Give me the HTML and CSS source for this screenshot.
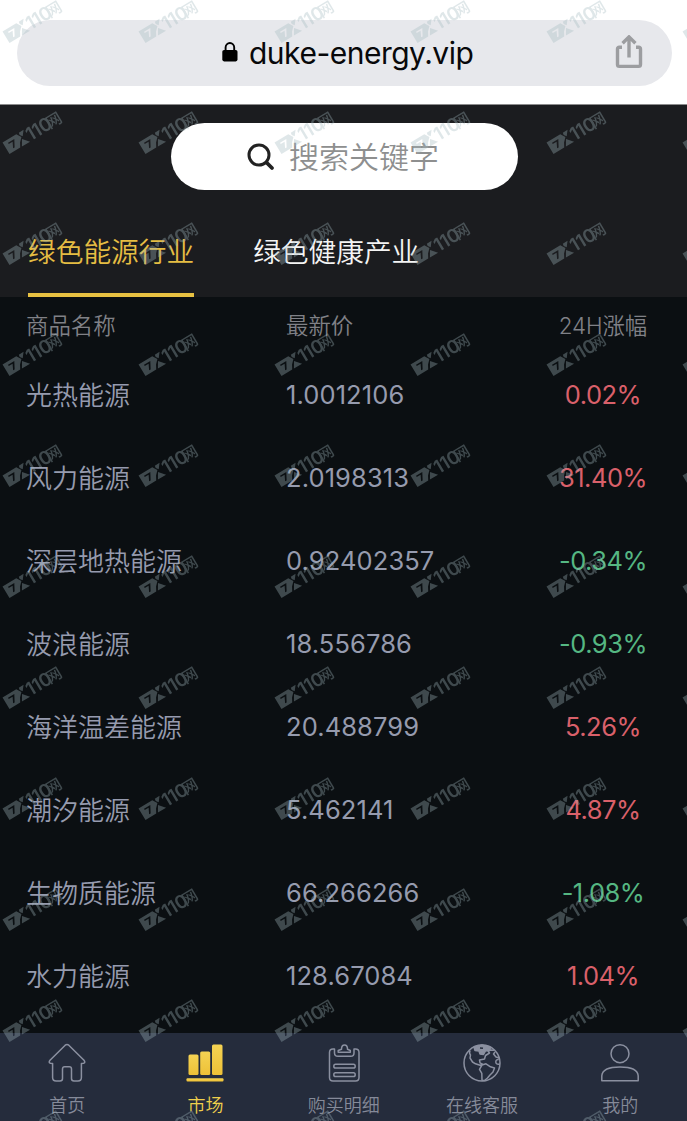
FILE: index.html
```html
<!DOCTYPE html>
<html lang="zh-CN">
<head>
<meta charset="utf-8">
<title>duke-energy.vip</title>
<link rel="stylesheet" href="styles.css">
</head>
<body>
<div class="screen">
  <header class="browser">
    <div class="address">
      <svg class="lock" viewBox="0 0 16 20"><rect x="0.3" y="8" width="15.2" height="11.4" rx="1.8" fill="#000"/><path d="M3.6 9V5.6a4.3 4.6 0 0 1 8.6 0V9" fill="none" stroke="#000" stroke-width="1.9"/></svg>
      <span class="url">duke-energy.vip</span>
      <svg class="share" viewBox="0 0 28 34"><path d="M7 12.3H4.2a1.7 1.7 0 0 0-1.7 1.7v15.500a1.900 1.900 0 0 0 1.900 1.900h19.200a1.900 1.900 0 0 0 1.900-1.900V14a1.700 1.700 0 0 0-1.700-1.700H21M14 22.500V3M7.600 8.300 14 1.900l6.400 6.400" fill="none" stroke="#9c9da0" stroke-width="3.400"/></svg>
    </div>
  </header>
  <section class="top">
    <div class="search">
      <svg class="glass" viewBox="0 0 28 28"><circle cx="12" cy="12" r="10" fill="none" stroke="#222" stroke-width="3"/><path d="M19.500 19.500 25 25" stroke="#222" stroke-width="3.800" stroke-linecap="round"/></svg>
      <span class="hint">搜索关键字</span>
    </div>
    <nav class="tabs">
      <span class="tab tab-active">绿色能源行业</span>
      <span class="tab">绿色健康产业</span>
    </nav>
  </section>
  <main class="market">
    <div class="row head"><span>商品名称</span><span>最新价</span><span class="head-change">24H涨幅</span></div>
    <div class="row"><span>光热能源</span><span class="num">1.0012106</span><span class="change up">0.02%</span></div>
    <div class="row"><span>风力能源</span><span class="num">2.0198313</span><span class="change up">31.40%</span></div>
    <div class="row"><span>深层地热能源</span><span class="num">0.92402357</span><span class="change down">-0.34%</span></div>
    <div class="row"><span>波浪能源</span><span class="num">18.556786</span><span class="change down">-0.93%</span></div>
    <div class="row"><span>海洋温差能源</span><span class="num">20.488799</span><span class="change up">5.26%</span></div>
    <div class="row"><span>潮汐能源</span><span class="num">5.462141</span><span class="change up">4.87%</span></div>
    <div class="row"><span>生物质能源</span><span class="num">66.266266</span><span class="change down">-1.08%</span></div>
    <div class="row"><span>水力能源</span><span class="num">128.67084</span><span class="change up">1.04%</span></div>
  </main>
  <footer class="dock">
    <div class="item">
      <svg class="icon" viewBox="0 0 40 40"><path d="M18.200 2.200q1.800-1.500 3.600 0L37 17.200q2.400 3.300-2.600 3.300V34.500q0 3.500-3.500 3.500H27q-2.500 0-2.500-2.500V26q0-2.200-2.200-2.200h-4.600q-2.200 0-2.200 2.200v9.500q0 2.500-2.500 2.500H9.100q-3.500 0-3.500-3.500V20.500q-5 0-2.600-3.300z"/></svg>
      <span>首页</span>
    </div>
    <div class="item item-active">
      <svg class="icon" viewBox="0 0 40 40"><defs><linearGradient id="gold" x2="0" y2="1"><stop stop-color="#f5d353"/><stop offset="1" stop-color="#eec137"/></linearGradient></defs><g fill="url(#gold)" stroke="none"><rect x="3.500" y="11.500" width="10" height="20.500" rx="1.500"/><rect x="15.200" y="8.500" width="10" height="23.500" rx="1.500"/><rect x="27" y="1.500" width="10.500" height="30.500" rx="1.500"/><rect x="1.500" y="35.200" width="37" height="3.200" rx="1"/></g></svg>
      <span>市场</span>
    </div>
    <div class="item">
      <svg class="icon" viewBox="0 0 40 40"><path d="M10.500 6H9q-3.500 0-3.500 3.500v25q0 3.500 3.500 3.500h22.500q3.500 0 3.500-3.500v-25q0-3.500-3.500-3.500H30v4q0 3.300-3.300 3.300H14q-3.500 0-3.500-3.300zM14.200 9.200V7.500l3.300-1.200q0-4.300 3-4.300t3 4.300L26.300 7.500v1.700zM11.500 21.300h18q1.700 0 1.700 1.900t-1.700 1.900h-18q-1.700 0-1.700-1.900t1.700-1.900zM11.500 29.800h18q1.700 0 1.700 1.900t-1.700 1.900h-18q-1.700 0-1.700-1.900t1.700-1.900z"/></svg>
      <span>购买明细</span>
    </div>
    <div class="item">
      <svg class="icon" viewBox="0 0 40 40"><circle cx="20" cy="20" r="18"/><path d="M8 7.500q-1 3 .5 4.500l-.5 3 2.500 4 3 1.800 4.500 1.500 2.500-1.200-2.500-1.300-.5-2.800 5-1 1-3.500 4-2.500-1.500-2 3-1 3 .2M20 22l4-1.200 4.500 3 4 1.200-1.500 4-3 3-2.500 3-3 2.500-2.500-.2-.2-7-2.300-4zM37.500 15l-3.500-1-2.500-3 1.500-2M37.800 21q-4 .8-4-2t3-2.500"/><path d="M12 4.200 20 2l9 2.500-1.500 2.800-4 .7-2 3.500-3.500-.5-1-3-4-.5z" fill="#8b90a0"/><path d="m18 5 3 .2" stroke="#252c3c"/></svg>
      <span>在线客服</span>
    </div>
    <div class="item">
      <svg class="icon" viewBox="0 0 40 40"><circle cx="20" cy="10.700" r="9"/><path d="M1.800 37.800v-5Q2.500 24 20 24t18.200 8.800v5z"/></svg>
      <span>我的</span>
    </div>
  </footer>
  <svg class="watermark" width="687" height="1121">
    <defs>
      <pattern id="stamp" width="136" height="111" patternUnits="userSpaceOnUse">
        <g transform="translate(9.500 43) rotate(-31)" fill="#a3bac0">
          <path fill-rule="evenodd" d="M0-13.500H16L19-8.500 15-4.500 12.500 0H0zM4.500-9H9L6-3H7.800L11.800-10.300H4.500z"/>
          <path d="M19-13.500H24.500L20.500-8.500 18.500-11zM18.500-6.500 24 0H14.500z"/>
          <text class="stamp-num" x="24.500" y="-.2">110</text>
          <text class="stamp-cjk" x="47.500" y="-.5">网</text>
        </g>
      </pattern>
    </defs>
    <rect width="687" height="1121" fill="url(#stamp)"/>
  </svg>
</div>
</body>
</html>
```
FILE: styles.css
```css
* { box-sizing: border-box; }
body {
  margin: 0;
  font-family: Inter, "Noto Sans CJK SC", sans-serif;
  font-weight: 350;
  background: #0b0f12;
}
.screen {
  position: relative;
  width: 687px;
  height: 1121px;
  overflow: hidden;
  display: flex;
  flex-direction: column;
}
.browser {
  height: 105px;
  padding: 20px 15px 0 17px;
  background: #fff;
  border-bottom: 1px solid #8b8b8c;
}
.address {
  height: 66px;
  border-radius: 33px;
  background: #e7e8ec;
  display: flex;
  align-items: center;
  padding: 0 28px 0 205px;
}
.lock { width: 16px; height: 20px; margin-top: -2px; }
.url {
  margin-left: 11px;
  font-size: 30px;
  font-weight: 400;
  letter-spacing: -0.5px;
  line-height: 60px;
  color: #08080a;
  white-space: nowrap;
}
.share { width: 28px; height: 34px; margin-left: auto; margin-right: 1px; margin-top: -2px; }
.top {
  height: 192px;
  padding-top: 18px;
  background: #1b1c1f;
}
.search {
  width: 347px;
  height: 67px;
  margin-left: 171px;
  padding-left: 76px;
  border-radius: 34px;
  background: #fff;
  display: flex;
  align-items: center;
}
.glass { width: 28px; height: 28px; }
.hint { margin-left: 14px; margin-top: -4px; font-size: 30px; color: #8e8f8f; }
.tabs {
  display: flex;
  gap: 59px;
  padding-left: 28px;
  margin-top: 27px;
}
.tab {
  height: 80px;
  font-size: 27.7px;
  line-height: 70px;
  color: #f4f4f4;
  border-bottom: 4px solid transparent;
}
.tab-active { color: #e5bd43; border-bottom-color: #e8c142; }
.market { flex: 1; }
.row {
  height: 83px;
  display: grid;
  grid-template-columns: 260px 233px 168px;
  align-items: center;
  padding: 0 0 2px 26px;
  font-size: 26px;
  color: #969bae;
}
.head { height: 56px; font-size: 22.400px; color: #808187; }
.num { padding-top: 2px; font-size: 25.500px; font-weight: 400; letter-spacing: .1px; }
.head-change { text-align: center; letter-spacing: -.1px; }
.change {
  padding-top: 2px;
  text-align: center;
  font-size: 25.500px;
  font-weight: 400;
  letter-spacing: -.5px;
}
.up { color: #d9606a; }
.down { color: #55b782; }
.dock {
  height: 88px;
  margin-left: -2px;
  padding-top: 10px;
  background: #252c3c;
  display: grid;
  grid-template-columns: repeat(5, 138.300px);
  width: 692px;
}
.item {
  display: flex;
  flex-direction: column;
  align-items: center;
  font-size: 18px;
  line-height: 26px;
  color: #858a99;
}
.item span { margin-top: 10px; }
.item-active { color: #efd04c; }
.icon {
  width: 40px;
  height: 40px;
  fill: none;
  stroke: #8b90a0;
  stroke-width: 1.500;
  stroke-linejoin: round;
}
.watermark {
  position: absolute;
  left: 0;
  top: 0;
  opacity: .34;
}
.stamp-num { font: 600 18.500px Inter, sans-serif; letter-spacing: -.4px; }
.stamp-cjk { font: 500 15.500px "Noto Sans CJK SC", sans-serif; }
```
